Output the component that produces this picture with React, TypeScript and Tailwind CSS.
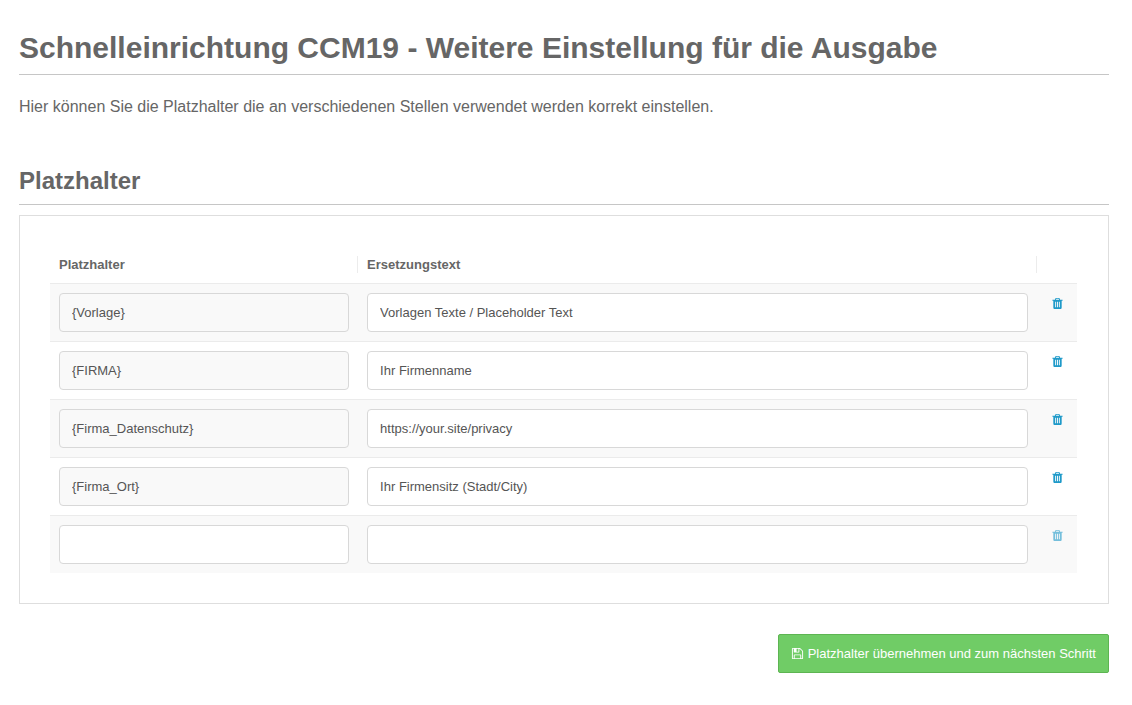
import { useState } from "react";

type Row = { name: string; text: string };

const initialRows: Row[] = [
  { name: "{Vorlage}", text: "Vorlagen Texte / Placeholder Text" },
  { name: "{FIRMA}", text: "Ihr Firmenname" },
  { name: "{Firma_Datenschutz}", text: "https://your.site/privacy" },
  { name: "{Firma_Ort}", text: "Ihr Firmensitz (Stadt/City)" },
  { name: "", text: "" },
];

function TrashIcon() {
  return (
    <svg viewBox="0 0 1792 1792" className="size-[13px]" fill="currentColor" aria-hidden="true">
      <path d="M704 1376v-704q0-14-9-23t-23-9h-64q-14 0-23 9t-9 23v704q0 14 9 23t23 9h64q14 0 23-9t9-23zm256 0v-704q0-14-9-23t-23-9h-64q-14 0-23 9t-9 23v704q0 14 9 23t23 9h64q14 0 23-9t9-23zm256 0v-704q0-14-9-23t-23-9h-64q-14 0-23 9t-9 23v704q0 14 9 23t23 9h64q14 0 23-9t9-23zm-544-992h448l-48-117q-7-9-17-11h-317q-10 2-17 11zm928 32v64q0 14-9 23t-23 9h-96v948q0 83-47 143.5t-113 60.5h-832q-66 0-113-58.5t-47-141.5v-952h-96q-14 0-23-9t-9-23v-64q0-14 9-23t23-9h309l70-167q15-37 54-63t79-26h320q40 0 79 26t54 63l70 167h309q14 0 23 9t9 23z" />
    </svg>
  );
}

function SaveIcon() {
  return (
    <svg viewBox="0 0 1792 1792" className="size-[13px]" fill="currentColor" aria-hidden="true">
      <path d="M512 1536h768v-384h-768v384zm896 0h128v-896q0-14-10-38.5t-20-34.5l-281-281q-10-10-34-20t-39-10v416q0 40-28 68t-68 28h-576q-40 0-68-28t-28-68v-416h-128v1280h128v-416q0-40 28-68t68-28h832q40 0 68 28t28 68v416zm-384-928v-320q0-13-9.5-22.5t-22.5-9.5h-192q-13 0-22.5 9.5t-9.5 22.5v320q0 13 9.5 22.5t22.5 9.5h192q13 0 22.5-9.5t9.5-22.5zm640 32v928q0 40-28 68t-68 28h-1344q-40 0-68-28t-28-68v-1344q0-40 28-68t68-28h928q40 0 88 20t76 48l280 280q28 28 48 76t20 88z" />
    </svg>
  );
}

const inputClass =
  "block h-[39px] w-full rounded border border-[#d8d8d8] px-3 text-[13px] text-[#555] outline-none focus:border-[#85b7d9]";

export default function App() {
  const [rows, setRows] = useState(initialRows);

  const update = (index: number, patch: Partial<Row>) =>
    setRows(rows.map((row, i) => (i === index ? { ...row, ...patch } : row)));

  return (
    <main className="min-h-screen bg-white pt-7 pr-[23px] pb-8 pl-[19px] font-['Liberation_Sans',Arial,sans-serif] text-[#666]">
      <h1 className="border-b border-[#c6c6c6] pb-[6px] text-[30px] leading-10 font-bold">
        Schnelleinrichtung CCM19 - Weitere Einstellung für die Ausgabe
      </h1>
      <p className="mt-5 text-base leading-6">
        Hier können Sie die Platzhalter die an verschiedenen Stellen verwendet werden korrekt einstellen.
      </p>

      <h2 className="mt-11 border-b border-[#c6c6c6] pb-[5px] text-2xl leading-9 font-bold">Platzhalter</h2>

      <form onSubmit={(event) => event.preventDefault()}>
        <div className="mt-[10px] border border-[#dedede] py-[30px] pr-[31px] pl-[30px]">
          <table className="w-full table-fixed border-separate border-spacing-0 text-[13px]">
            <thead>
              <tr className="text-left leading-[17px]">
                <th scope="col" className="w-[30%] py-[10px] font-bold">
                  <div className="border-r border-[#ececec] pl-[9px]">Platzhalter</div>
                </th>
                <th scope="col" className="py-[10px] font-bold">
                  <div className="border-r border-[#ececec] pl-[9px]">Ersetzungstext</div>
                </th>
                <th scope="col" className="w-10" aria-label="Löschen" />
              </tr>
            </thead>
            <tbody>
              {rows.map((row, index) => {
                const empty = index === rows.length - 1;
                return (
                  <tr key={index} className="odd:bg-[#f9f9f9]">
                    <td className="border-t border-[#ebebeb] p-[9px]">
                      <input
                        type="text"
                        aria-label="Platzhalter"
                        readOnly={!empty}
                        value={row.name}
                        onChange={(event) => update(index, { name: event.target.value })}
                        className={`${inputClass} ${empty ? "bg-white" : "bg-[#f9f9f9]"}`}
                      />
                    </td>
                    <td className="border-t border-[#ebebeb] p-[9px]">
                      <input
                        type="text"
                        aria-label="Ersetzungstext"
                        value={row.text}
                        onChange={(event) => update(index, { text: event.target.value })}
                        className={`${inputClass} bg-white`}
                      />
                    </td>
                    <td className="border-t border-[#ebebeb] pt-[13px] align-top">
                      <button
                        type="button"
                        aria-label="Löschen"
                        disabled={empty}
                        onClick={() => setRows(rows.filter((_, i) => i !== index))}
                        className="mx-auto block text-[#1f9ac9] disabled:opacity-60"
                      >
                        <TrashIcon />
                      </button>
                    </td>
                  </tr>
                );
              })}
            </tbody>
          </table>
        </div>

        <div className="mt-[30px] flex justify-end">
          <button
            type="submit"
            className="flex h-[39px] items-center gap-1 rounded-xs border border-[#5db552] bg-[#70cc66] px-3 text-[13px] text-white"
          >
            <SaveIcon />
            Platzhalter übernehmen und zum nächsten Schritt
          </button>
        </div>
      </form>
    </main>
  );
}
